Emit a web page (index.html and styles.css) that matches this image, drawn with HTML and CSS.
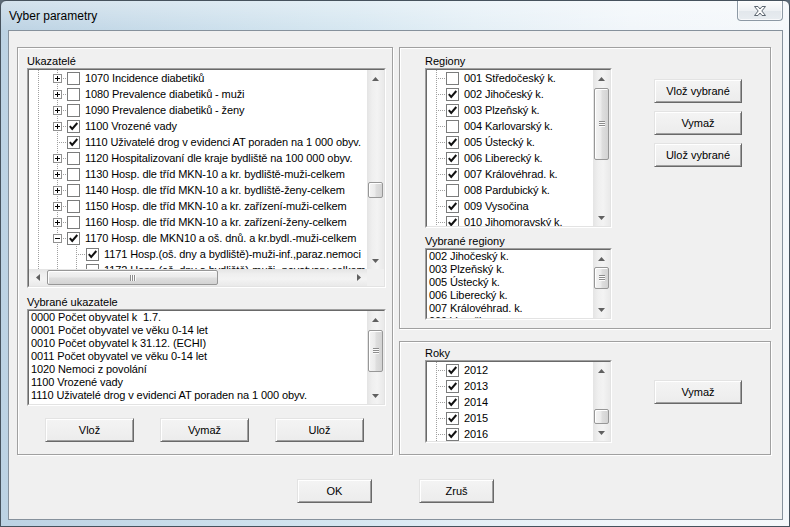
FILE: index.html
```html
<!DOCTYPE html>
<html lang="cs">
<head>
<meta charset="utf-8">
<title>Vyber parametry</title>
<link rel="stylesheet" href="styles.css">
</head>
<body>
<div class="window">
  <div class="titlebar">
    <span class="title">Vyber parametry</span>
    <div class="close">
      <svg width="14" height="12" viewBox="0 0 14 12"><path d="M1.5 1.5H5L7 4L9 1.5H12.5L8.8 6L12.5 10.5H9L7 8L5 10.5H1.5L5.2 6Z" fill="#fdfdfd" stroke="#5c6670" stroke-width="1" stroke-linejoin="round"/></svg>
    </div>
  </div>
  <div class="client">
    <div class="groups">
      <div class="group gleft">
        <div class="lbl">Ukazatelé</div>
        <div class="listbox treebox">
          <div class="lb-in treegrid">
            <div class="treeview">
              <div class="trow"><span class="cell v"></span><span class="cell c"><span class="exp plus"></span></span><span class="cb"></span><span class="tx">1070 Incidence diabetiků</span></div>
              <div class="trow"><span class="cell v"></span><span class="cell c"><span class="exp plus"></span></span><span class="cb"></span><span class="tx">1080 Prevalence diabetiků - muži</span></div>
              <div class="trow"><span class="cell v"></span><span class="cell c"><span class="exp plus"></span></span><span class="cb"></span><span class="tx">1090 Prevalence diabetiků - ženy</span></div>
              <div class="trow"><span class="cell v"></span><span class="cell c"><span class="exp plus"></span></span><span class="cb"><svg width="11" height="11" viewBox="0 0 11 11"><path d="M1.8 5.2L4.2 8L9.3 2" fill="none" stroke="#111" stroke-width="2"/></svg></span><span class="tx">1100 Vrozené vady</span></div>
              <div class="trow"><span class="cell v"></span><span class="cell c"></span><span class="cb"><svg width="11" height="11" viewBox="0 0 11 11"><path d="M1.8 5.2L4.2 8L9.3 2" fill="none" stroke="#111" stroke-width="2"/></svg></span><span class="tx">1110 Uživatelé drog v evidenci AT poraden na 1 000 obyv.</span></div>
              <div class="trow"><span class="cell v"></span><span class="cell c"><span class="exp plus"></span></span><span class="cb"></span><span class="tx">1120 Hospitalizovaní dle kraje bydliště na 100 000 obyv.</span></div>
              <div class="trow"><span class="cell v"></span><span class="cell c"><span class="exp plus"></span></span><span class="cb"></span><span class="tx">1130 Hosp. dle tříd MKN-10 a kr. bydliště-muži-celkem</span></div>
              <div class="trow"><span class="cell v"></span><span class="cell c"><span class="exp plus"></span></span><span class="cb"></span><span class="tx">1140 Hosp. dle tříd MKN-10 a kr. bydliště-ženy-celkem</span></div>
              <div class="trow"><span class="cell v"></span><span class="cell c"><span class="exp plus"></span></span><span class="cb"></span><span class="tx">1150 Hosp. dle tříd MKN-10 a kr. zařízení-muži-celkem</span></div>
              <div class="trow"><span class="cell v"></span><span class="cell c"><span class="exp plus"></span></span><span class="cb"></span><span class="tx">1160 Hosp. dle tříd MKN-10 a kr. zařízení-ženy-celkem</span></div>
              <div class="trow"><span class="cell v"></span><span class="cell c"><span class="exp minus"></span></span><span class="cb"><svg width="11" height="11" viewBox="0 0 11 11"><path d="M1.8 5.2L4.2 8L9.3 2" fill="none" stroke="#111" stroke-width="2"/></svg></span><span class="tx">1170 Hosp. dle MKN10 a oš. dnů. a kr.bydl.-muži-celkem</span></div>
              <div class="trow"><span class="cell v"></span><span class="cell v"></span><span class="cell c"></span><span class="cb"><svg width="11" height="11" viewBox="0 0 11 11"><path d="M1.8 5.2L4.2 8L9.3 2" fill="none" stroke="#111" stroke-width="2"/></svg></span><span class="tx">1171 Hosp.(oš. dny a bydliště)-muži-inf.,paraz.nemoci</span></div>
              <div class="trow"><span class="cell v"></span><span class="cell v"></span><span class="cell c"></span><span class="cb"></span><span class="tx">1172 Hosp.(oš. dny a bydliště)-muži- novotvary celkem</span></div>
            </div>
            <div class="vscroll">
              <div class="sarrow"><svg width="7" height="4" viewBox="0 0 7 4"><path d="M3.5 0L7 4H0Z" fill="#606060"/></svg></div>
              <div class="strack"><div class="thumb t-tree"></div></div>
              <div class="sarrow"><svg width="7" height="4" viewBox="0 0 7 4"><path d="M0 0H7L3.5 4Z" fill="#606060"/></svg></div>
            </div>
            <div class="hscroll">
              <div class="sarrow h"><svg width="4" height="7" viewBox="0 0 4 7"><path d="M0 3.5L4 0V7Z" fill="#606060"/></svg></div>
              <div class="htrack"><div class="hthumb"><span class="grip-h"></span></div></div>
              <div class="sarrow h"><svg width="4" height="7" viewBox="0 0 4 7"><path d="M0 0L4 3.5L0 7Z" fill="#606060"/></svg></div>
            </div>
            <div class="corner"></div>
          </div>
        </div>
        <div class="lbl lbl-gap">Vybrané ukazatele</div>
        <div class="listbox selbox">
          <div class="lb-in listgrid">
            <div class="listview">
              <div class="lrow">0000 Počet obyvatel k  1.7.</div>
              <div class="lrow">0001 Počet obyvatel ve věku 0-14 let</div>
              <div class="lrow">0010 Počet obyvatel k 31.12. (ECHI)</div>
              <div class="lrow">0011 Počet obyvatel ve věku 0-14 let</div>
              <div class="lrow">1020 Nemoci z povolání</div>
              <div class="lrow">1100 Vrozené vady</div>
              <div class="lrow">1110 Uživatelé drog v evidenci AT poraden na 1 000 obyv.</div>
              <div class="lrow">1171 Hosp.(oš. dny a bydliště)-muži-inf.,paraz.nemoci</div>
            </div>
            <div class="vscroll">
              <div class="sarrow"><svg width="7" height="4" viewBox="0 0 7 4"><path d="M3.5 0L7 4H0Z" fill="#606060"/></svg></div>
              <div class="strack"><div class="thumb t-sel"><span class="grip-v"></span></div></div>
              <div class="sarrow"><svg width="7" height="4" viewBox="0 0 7 4"><path d="M0 0H7L3.5 4Z" fill="#606060"/></svg></div>
            </div>
          </div>
        </div>
        <div class="btnrow">
          <button class="btn w89">Vlož</button>
          <button class="btn w89">Vymaž</button>
          <button class="btn w89">Ulož</button>
        </div>
      </div>

      <div class="rightcol">
        <div class="group gtop">
          <div class="rrow">
            <div class="rlists">
              <div class="lbl">Regiony</div>
              <div class="listbox regbox">
                <div class="lb-in listgrid">
                  <div class="treeview">
                    <div class="trow"><span class="cell c"></span><span class="cb"></span><span class="tx">001 Středočeský k.</span></div>
                    <div class="trow"><span class="cell c"></span><span class="cb"><svg width="11" height="11" viewBox="0 0 11 11"><path d="M1.8 5.2L4.2 8L9.3 2" fill="none" stroke="#111" stroke-width="2"/></svg></span><span class="tx">002 Jihočeský k.</span></div>
                    <div class="trow"><span class="cell c"></span><span class="cb"><svg width="11" height="11" viewBox="0 0 11 11"><path d="M1.8 5.2L4.2 8L9.3 2" fill="none" stroke="#111" stroke-width="2"/></svg></span><span class="tx">003 Plzeňský k.</span></div>
                    <div class="trow"><span class="cell c"></span><span class="cb"></span><span class="tx">004 Karlovarský k.</span></div>
                    <div class="trow"><span class="cell c"></span><span class="cb"><svg width="11" height="11" viewBox="0 0 11 11"><path d="M1.8 5.2L4.2 8L9.3 2" fill="none" stroke="#111" stroke-width="2"/></svg></span><span class="tx">005 Ústecký k.</span></div>
                    <div class="trow"><span class="cell c"></span><span class="cb"><svg width="11" height="11" viewBox="0 0 11 11"><path d="M1.8 5.2L4.2 8L9.3 2" fill="none" stroke="#111" stroke-width="2"/></svg></span><span class="tx">006 Liberecký k.</span></div>
                    <div class="trow"><span class="cell c"></span><span class="cb"><svg width="11" height="11" viewBox="0 0 11 11"><path d="M1.8 5.2L4.2 8L9.3 2" fill="none" stroke="#111" stroke-width="2"/></svg></span><span class="tx">007 Královéhrad. k.</span></div>
                    <div class="trow"><span class="cell c"></span><span class="cb"></span><span class="tx">008 Pardubický k.</span></div>
                    <div class="trow"><span class="cell c"></span><span class="cb"><svg width="11" height="11" viewBox="0 0 11 11"><path d="M1.8 5.2L4.2 8L9.3 2" fill="none" stroke="#111" stroke-width="2"/></svg></span><span class="tx">009 Vysočina</span></div>
                    <div class="trow"><span class="cell c"></span><span class="cb"><svg width="11" height="11" viewBox="0 0 11 11"><path d="M1.8 5.2L4.2 8L9.3 2" fill="none" stroke="#111" stroke-width="2"/></svg></span><span class="tx">010 Jihomoravský k.</span></div>
                  </div>
                  <div class="vscroll">
                    <div class="sarrow"><svg width="7" height="4" viewBox="0 0 7 4"><path d="M3.5 0L7 4H0Z" fill="#606060"/></svg></div>
                    <div class="strack"><div class="thumb t-reg"><span class="grip-v"></span></div></div>
                    <div class="sarrow"><svg width="7" height="4" viewBox="0 0 7 4"><path d="M0 0H7L3.5 4Z" fill="#606060"/></svg></div>
                  </div>
                </div>
              </div>
              <div class="lbl lbl-gap2">Vybrané regiony</div>
              <div class="listbox vregbox">
                <div class="lb-in listgrid">
                  <div class="listview">
                    <div class="lrow">002 Jihočeský k.</div>
                    <div class="lrow">003 Plzeňský k.</div>
                    <div class="lrow">005 Ústecký k.</div>
                    <div class="lrow">006 Liberecký k.</div>
                    <div class="lrow">007 Královéhrad. k.</div>
                    <div class="lrow">009 Vysočina</div>
                  </div>
                  <div class="vscroll">
                    <div class="sarrow"><svg width="7" height="4" viewBox="0 0 7 4"><path d="M3.5 0L7 4H0Z" fill="#606060"/></svg></div>
                    <div class="strack"><div class="thumb t-vreg"><span class="grip-v"></span></div></div>
                    <div class="sarrow"><svg width="7" height="4" viewBox="0 0 7 4"><path d="M0 0H7L3.5 4Z" fill="#606060"/></svg></div>
                  </div>
                </div>
              </div>
            </div>
            <div class="bcol bcol-top">
              <button class="btn w88">Vlož vybrané</button>
              <button class="btn w88">Vymaž</button>
              <button class="btn w88">Ulož vybrané</button>
            </div>
          </div>
        </div>

        <div class="group gbottom">
          <div class="rrow">
            <div class="rlists">
              <div class="lbl">Roky</div>
              <div class="listbox rokybox">
                <div class="lb-in listgrid">
                  <div class="treeview">
                    <div class="trow"><span class="cell c"></span><span class="cb"><svg width="11" height="11" viewBox="0 0 11 11"><path d="M1.8 5.2L4.2 8L9.3 2" fill="none" stroke="#111" stroke-width="2"/></svg></span><span class="tx">2012</span></div>
                    <div class="trow"><span class="cell c"></span><span class="cb"><svg width="11" height="11" viewBox="0 0 11 11"><path d="M1.8 5.2L4.2 8L9.3 2" fill="none" stroke="#111" stroke-width="2"/></svg></span><span class="tx">2013</span></div>
                    <div class="trow"><span class="cell c"></span><span class="cb"><svg width="11" height="11" viewBox="0 0 11 11"><path d="M1.8 5.2L4.2 8L9.3 2" fill="none" stroke="#111" stroke-width="2"/></svg></span><span class="tx">2014</span></div>
                    <div class="trow"><span class="cell c"></span><span class="cb"><svg width="11" height="11" viewBox="0 0 11 11"><path d="M1.8 5.2L4.2 8L9.3 2" fill="none" stroke="#111" stroke-width="2"/></svg></span><span class="tx">2015</span></div>
                    <div class="trow"><span class="cell c"></span><span class="cb"><svg width="11" height="11" viewBox="0 0 11 11"><path d="M1.8 5.2L4.2 8L9.3 2" fill="none" stroke="#111" stroke-width="2"/></svg></span><span class="tx">2016</span></div>
                  </div>
                  <div class="vscroll">
                    <div class="sarrow"><svg width="7" height="4" viewBox="0 0 7 4"><path d="M3.5 0L7 4H0Z" fill="#606060"/></svg></div>
                    <div class="strack"><div class="thumb t-roky"></div></div>
                    <div class="sarrow"><svg width="7" height="4" viewBox="0 0 7 4"><path d="M0 0H7L3.5 4Z" fill="#606060"/></svg></div>
                  </div>
                </div>
              </div>
            </div>
            <div class="bcol bcol-bottom">
              <button class="btn w88">Vymaž</button>
            </div>
          </div>
        </div>
      </div>
    </div>

    <div class="dlgbtns">
      <button class="btn w75">OK</button>
      <button class="btn w75">Zruš</button>
    </div>
  </div>
</div>
</body>
</html>
```

FILE: styles.css
```css
html, body {
  margin: 0;
  padding: 0;
  background: #5d6b78;
}
body {
  font-family: "Liberation Sans", Arial, sans-serif;
  font-size: 11px;
  color: #000;
}

.window {
  width: 790px;
  height: 527px;
  box-sizing: border-box;
  border: 1px solid #46525d;
  border-radius: 6px 6px 0 0;
  background:
    linear-gradient(to bottom, rgba(255,255,255,0.35), rgba(255,255,255,0) 30px),
    linear-gradient(to right, #bcd2e3 0%, #cadeeb 25%, #d6e7f1 45%, #e4eff6 60%, #f1f6fa 80%, #f5f8fb 100%);
  display: flex;
  flex-direction: column;
  overflow: hidden;
}

.titlebar {
  height: 29px;
  flex: none;
  display: flex;
  align-items: flex-start;
}
.title {
  font-size: 12px;
  line-height: 14px;
  margin: 8px 0 0 8px;
  color: #000;
}
.close {
  margin-left: auto;
  margin-right: 6px;
  width: 46px;
  height: 20px;
  box-sizing: border-box;
  border: 1px solid #8d99a5;
  border-top: none;
  border-radius: 0 0 4px 4px;
  background: linear-gradient(to bottom, #fdfdfd, #eef1f4 50%, #e2e7ec 51%, #e8ecf0);
  box-shadow: inset 0 0 0 1px rgba(255,255,255,0.7);
  display: flex;
  align-items: center;
  justify-content: center;
}

.client {
  flex: 1;
  margin: 0 6px 6px 7px;
  border: 1px solid #86919c;
  background: #f0f0f0;
  padding: 16px 11px 0 8px;
  display: flex;
  flex-direction: column;
}

.groups {
  display: flex;
  gap: 6px;
}
.group {
  box-sizing: border-box;
  border: 1px solid #a0a0a0;
  box-shadow: inset 1px 1px 0 #fff, 1px 1px 0 #fff;
}
.gleft {
  width: 376px;
  height: 408px;
  padding: 7px 6px 0 9px;
  display: flex;
  flex-direction: column;
}
.rightcol {
  width: 372px;
  display: flex;
  flex-direction: column;
  gap: 12px;
}
.gtop {
  height: 282px;
  padding: 7px 0 0 25px;
}
.gbottom {
  height: 114px;
  padding: 5px 0 0 25px;
}

.lbl {
  height: 13px;
  line-height: 13px;
  white-space: nowrap;
}
.lbl-gap { margin-top: 8px; }
.lbl-gap2 { margin-top: 7px; }

/* sunken list boxes */
.listbox {
  box-sizing: border-box;
  border: 1px solid;
  border-color: #a0a0a0 #fff #fff #a0a0a0;
  flex: none;
}
.lb-in {
  box-sizing: border-box;
  height: 100%;
  border: 1px solid;
  border-color: #696969 #e3e3e3 #e3e3e3 #696969;
  background: #fff;
  overflow: hidden;
}
.treebox { width: 359px; height: 220px; }
.selbox { width: 359px; height: 97px; }
.regbox { width: 187px; height: 160px; }
.vregbox { width: 187px; height: 72px; }
.rokybox { width: 187px; height: 83px; }

.treegrid {
  display: grid;
  grid-template-columns: 1fr 17px;
  grid-template-rows: 1fr 17px;
}
.listgrid {
  display: flex;
}
.treeview, .listview {
  flex: 1;
  min-width: 0;
  overflow: hidden;
}

/* tree rows */
.trow {
  display: flex;
  align-items: center;
  height: 16px;
  white-space: nowrap;
}
.cell {
  flex: none;
  width: 19px;
  height: 16px;
  box-sizing: border-box;
  background-repeat: no-repeat;
}
.cell.v {
  background-image: repeating-linear-gradient(to bottom, #a0a0a0 0 1px, transparent 1px 2px);
  background-size: 1px 100%;
  background-position: 9px 0;
}
.cell.c {
  display: flex;
  align-items: center;
  padding-left: 5px;
  background-image:
    repeating-linear-gradient(to bottom, #a0a0a0 0 1px, transparent 1px 2px),
    repeating-linear-gradient(to right, #a0a0a0 0 1px, transparent 1px 2px);
  background-size: 1px 100%, 9px 1px;
  background-position: 9px 0, 11px 8px;
}
.exp {
  width: 9px;
  height: 9px;
  box-sizing: border-box;
  border: 1px solid #919191;
  background-color: #fff;
  background-repeat: no-repeat;
}
.exp.plus {
  background-image: linear-gradient(#000, #000), linear-gradient(#000, #000);
  background-size: 5px 1px, 1px 5px;
  background-position: 1px 3px, 3px 1px;
}
.exp.minus {
  background-image: linear-gradient(#000, #000);
  background-size: 5px 1px;
  background-position: 1px 3px;
}
.cb {
  flex: none;
  width: 13px;
  height: 13px;
  box-sizing: border-box;
  border: 1px solid #7b7c7c;
  background: #fff;
  margin-right: 5px;
  display: flex;
}
.tx {
  line-height: 16px;
  letter-spacing: -0.1px;
}

/* list rows */
.lrow {
  height: 13px;
  line-height: 13px;
  padding-left: 2px;
  white-space: pre;
  letter-spacing: -0.1px;
}

/* scrollbars */
.vscroll {
  width: 17px;
  flex: none;
  display: flex;
  flex-direction: column;
  background: linear-gradient(to right, #e4e4e4, #efefef 30%, #f3f3f3 60%, #e9e9e9);
}
.sarrow {
  height: 17px;
  flex: none;
  display: flex;
  align-items: center;
  justify-content: center;
}
.sarrow.h {
  width: 17px;
  height: auto;
}
.strack {
  flex: 1;
  display: flex;
  flex-direction: column;
}
.thumb {
  flex: none;
  margin: 0 1px;
  box-sizing: border-box;
  border: 1px solid #979797;
  border-radius: 2px;
  background: linear-gradient(to right, #f4f4f4, #ebebeb 45%, #dedede 55%, #d3d3d3);
  box-shadow: inset 1px 1px 0 #fff;
  display: flex;
  align-items: center;
  justify-content: center;
}
.t-tree { margin-top: 95px; height: 16px; }
.t-sel { margin-top: 2px; height: 42px; }
.t-reg { margin-top: 1px; height: 72px; }
.t-vreg { margin-top: 0; height: 22px; }
.t-roky { margin-top: 30px; height: 15px; }

.grip-v {
  width: 6px;
  height: 6px;
  background: repeating-linear-gradient(to bottom, #8c8c8c 0 1px, #fbfbfb 1px 2px);
}
.grip-h {
  width: 6px;
  height: 6px;
  background: repeating-linear-gradient(to right, #8c8c8c 0 1px, #fbfbfb 1px 2px);
}
.hscroll {
  display: flex;
  height: 17px;
  background: linear-gradient(to bottom, #e4e4e4, #efefef 30%, #f3f3f3 60%, #e9e9e9);
}
.htrack {
  flex: 1;
  display: flex;
  align-items: stretch;
  padding: 1px 0;
}
.hthumb {
  width: 171px;
  margin-left: 1px;
  box-sizing: border-box;
  border: 1px solid #979797;
  border-radius: 2px;
  background: linear-gradient(to bottom, #f4f4f4, #ebebeb 45%, #dedede 55%, #d3d3d3);
  box-shadow: inset 1px 1px 0 #fff;
  display: flex;
  align-items: center;
  justify-content: center;
}
.corner {
  background: #f0f0f0;
}

/* buttons */
.btn {
  font-family: "Liberation Sans", Arial, sans-serif;
  font-size: 11px;
  font-weight: 400;
  color: #000;
  height: 24px;
  padding: 0;
  box-sizing: border-box;
  background: linear-gradient(to bottom, #f4f4f4, #ececec);
  border: 1px solid;
  border-color: #e3e3e3 #696969 #696969 #e3e3e3;
  box-shadow: inset 1px 1px 0 #fff, inset -1px -1px 0 #a0a0a0;
  flex: none;
}
.w89 { width: 89px; }
.w88 { width: 88px; }
.w75 { width: 75px; }

.btnrow {
  display: flex;
  gap: 26px;
  margin: 12px 0 0 18px;
}

.rrow {
  display: flex;
}
.rlists {
  width: 187px;
  display: flex;
  flex-direction: column;
}
.bcol {
  margin-left: 42px;
  display: flex;
  flex-direction: column;
  gap: 8px;
}
.bcol-top { padding-top: 24px; }
.bcol-bottom { padding-top: 33px; }

.dlgbtns {
  display: flex;
  justify-content: center;
  gap: 47px;
  margin: 24px 0 0 3px;
}
```
